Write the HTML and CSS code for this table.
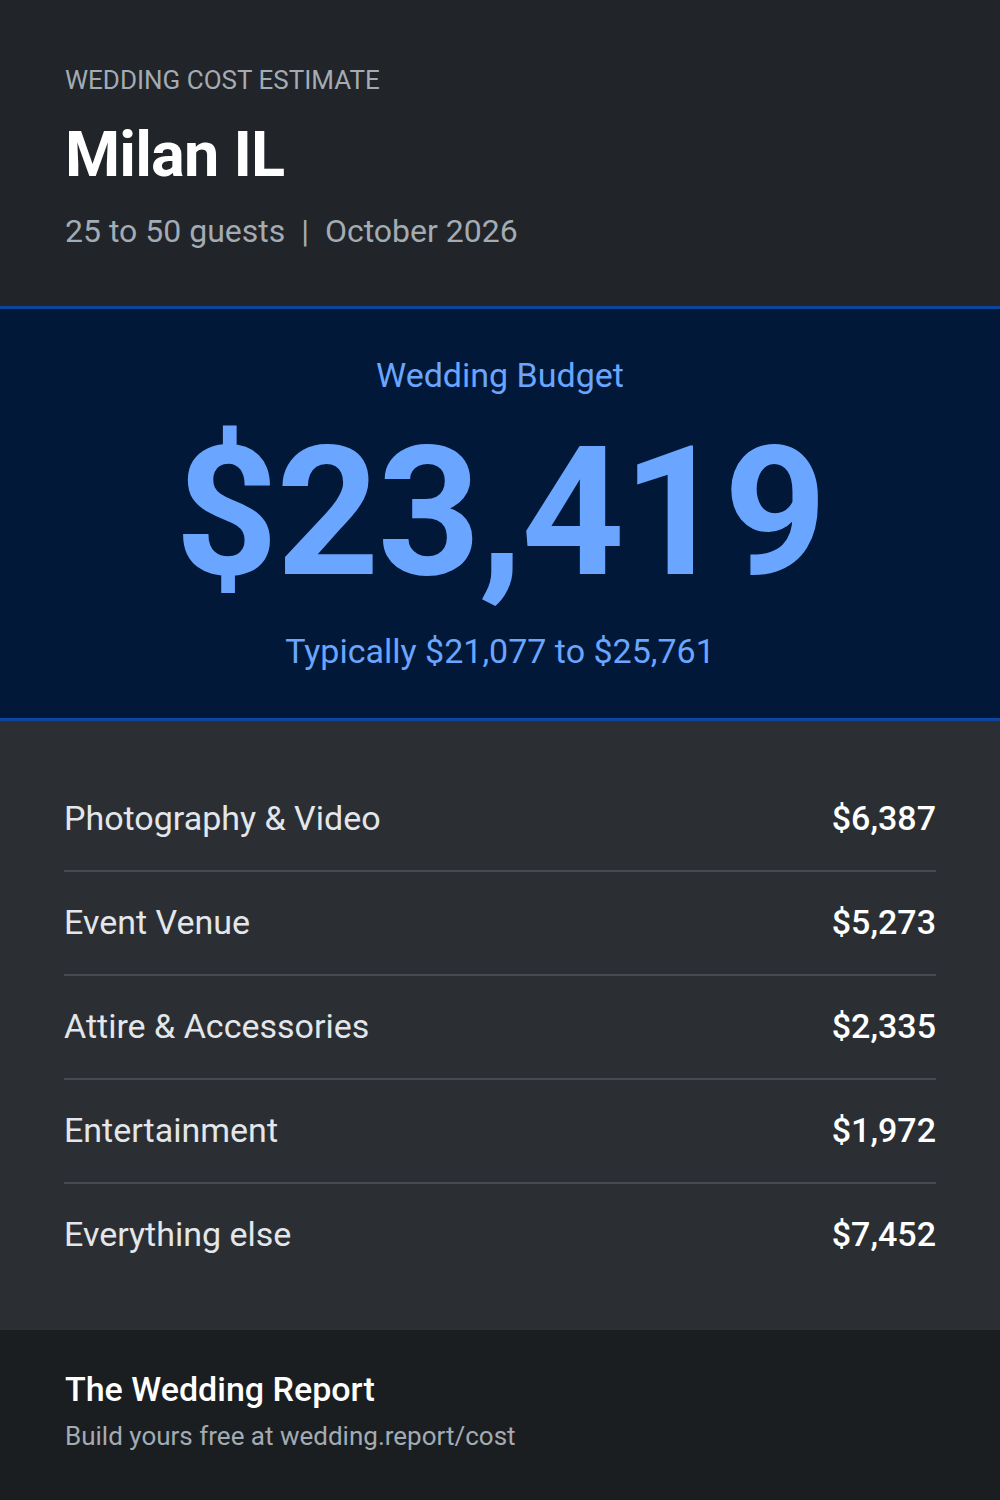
FILE: index.html
```html
<!DOCTYPE html>
<html lang="en">
<head>
<meta charset="utf-8">
<title>Wedding Cost Estimate</title>
<link rel="stylesheet" href="styles.css">
</head>
<body>
<div class="card">
  <header class="head">
    <div class="eyebrow">WEDDING COST ESTIMATE</div>
    <h1 class="city">Milan IL</h1>
    <div class="meta">25 to 50 guests <span class="sep">|</span> October 2026</div>
  </header>
  <section class="hero">
    <div class="hero-label">Wedding Budget</div>
    <div class="hero-total">$23,419</div>
    <div class="hero-range">Typically $21,077 to $25,761</div>
  </section>
  <section class="items">
    <div class="row"><span class="name">Photography &amp; Video</span><span class="amt">$6,387</span></div>
    <div class="row"><span class="name">Event Venue</span><span class="amt">$5,273</span></div>
    <div class="row"><span class="name">Attire &amp; Accessories</span><span class="amt">$2,335</span></div>
    <div class="row"><span class="name">Entertainment</span><span class="amt">$1,972</span></div>
    <div class="row"><span class="name">Everything else</span><span class="amt">$7,452</span></div>
  </section>
  <footer class="foot">
    <div class="brand">The Wedding Report</div>
    <div class="cta">Build yours free at wedding.report/cost</div>
  </footer>
</div>
</body>
</html>
```

FILE: styles.css
```css
* { box-sizing: border-box; }
html, body { margin: 0; padding: 0; }
body {
  font-family: Roboto, "Liberation Sans", sans-serif;
  background: #1b1e21;
  width: 1000px;
  height: 1500px;
}
.card {
  display: flex;
  flex-direction: column;
  height: 1500px;
}
.head {
  background: #212428;
  padding: 64px 65px 0;
  height: 306px;
}
.eyebrow {
  font-size: 26px;
  line-height: 32px;
  color: #a3abb3;
}
.city {
  margin: 21px 0 0;
  font-size: 63px;
  line-height: 76px;
  font-weight: 700;
  color: #ffffff;
  letter-spacing: -0.8px;
}
.meta {
  margin-top: 19px;
  font-size: 32px;
  line-height: 38px;
  color: #a3abb3;
}
.sep { margin: 0 8px; }
.hero {
  background: #011838;
  border-top: 3px solid #0b47a1;
  border-bottom: 3px solid #0b47a1;
  height: 415px;
  display: flex;
  flex-direction: column;
  align-items: center;
  padding-top: 46px;
}
.hero-label {
  font-size: 34px;
  line-height: 40px;
  color: #6aa5ff;
}
.hero-total {
  margin-top: 18px;
  font-size: 180px;
  line-height: 200px;
  font-weight: 700;
  color: #6aa5ff;
  letter-spacing: -2px;
}
.hero-range {
  margin-top: 18px;
  font-size: 34px;
  line-height: 40px;
  color: #6aa5ff;
}
.items {
  background: #2b2f33;
  padding: 47px 64px 0;
  height: 609px;
}
.row {
  display: flex;
  justify-content: space-between;
  align-items: center;
  padding: 30px 0 32px;
  border-bottom: 2px solid #464b51;
  font-size: 34px;
  line-height: 40px;
}
.row:last-child { border-bottom: none; }
.name { color: #e3e6ea; }
.amt { color: #ffffff; font-weight: 500; }
.foot {
  background: #1b1e21;
  flex: 1;
  padding: 39px 65px 0;
}
.brand {
  font-size: 34px;
  line-height: 40px;
  font-weight: 500;
  color: #ffffff;
}
.cta {
  margin-top: 11px;
  font-size: 26px;
  line-height: 32px;
  color: #a3abb3;
}
```
